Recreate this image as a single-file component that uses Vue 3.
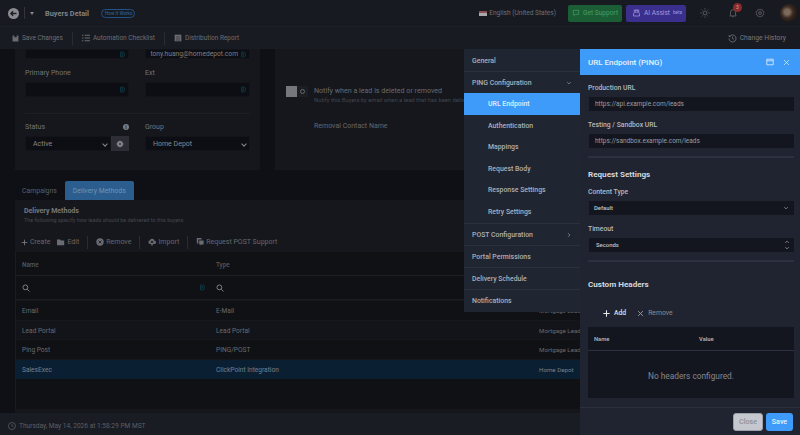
<script setup>
import { ref } from 'vue';

const subItems = ref(['Authentication', 'Mappings', 'Request Body', 'Response Settings', 'Retry Settings']);
const bottomItems = ref(['Portal Permissions', 'Delivery Schedule', 'Notifications']);
const rows = ref([
  { name: 'Email', type: 'E-Mail', group: 'Mortgage Lead' },
  { name: 'Lead Portal', type: 'Lead Portal', group: 'Mortgage Lead' },
  { name: 'Ping Post', type: 'PING/POST', group: 'Mortgage Lead' },
  { name: 'SalesExec', type: 'ClickPoint Integration', group: 'Home Depot', selected: true }
]);
</script>

<template>
  <div class="app">
    <header class="topbar">
      <span class="back">
        <svg viewBox="0 0 12 12" width="9" height="9"><path d="M10 6H2.5M5.5 3 2.5 6l3 3" fill="none" stroke="#1c1e25" stroke-width="1.8"/></svg>
      </span>
      <span class="bar-sep"></span>
      <span class="caret"></span>
      <span class="page-title">Buyers Detail</span>
      <span class="how">How It Works</span>
      <span class="grow"></span>
      <span class="flag"></span>
      <span class="lang">English (United States)</span>
      <span class="btn-support">
        <svg viewBox="0 0 12 12" width="8" height="8"><path d="M2 2h8v6H5L3 10V8H2z" fill="none" stroke="#47a266" stroke-width="1"/></svg>
        Get Support
      </span>
      <span class="btn-ai">
        <svg viewBox="0 0 12 12" width="9" height="10"><path d="M3 2h6v4l1 1v3H2V7l1-1zM5 2v4M7 2v4" fill="none" stroke="#a59ae0" stroke-width="1"/></svg>
        AI Assist <sup>beta</sup>
      </span>
      <svg class="top-icon sun" viewBox="0 0 12 12" width="10" height="10"><circle cx="6" cy="6" r="2.3" fill="none" stroke="#63656b"/><path d="M6 0v2M6 10v2M0 6h2M10 6h2M1.8 1.8l1.4 1.4M8.8 8.8l1.4 1.4M1.8 10.2l1.4-1.4M8.8 3.2l1.4-1.4" stroke="#63656b" stroke-width=".8"/></svg>
      <span class="bell">
        <svg viewBox="0 0 12 12" width="10" height="10"><path d="M3 8.5V5a3 3 0 0 1 6 0v3.5l1 1H2zM5 10.5h2" fill="none" stroke="#63656b"/></svg>
        <span class="badge">3</span>
      </span>
      <svg class="top-icon gear" viewBox="0 0 12 12" width="10" height="10"><circle cx="6" cy="6" r="1.7" fill="none" stroke="#63656b"/><path d="M6 1l1 1.3 1.7-.3.6 1.6 1.5.9-.7 1.5.7 1.5-1.5.9-.6 1.6L7 9.7 6 11l-1-1.3-1.7.3-.6-1.6-1.5-.9.7-1.5-.7-1.5 1.5-.9.6-1.6L5 2.3z" fill="none" stroke="#63656b" stroke-width=".8"/></svg>
      <span class="avatar"></span>
    </header>

    <div class="toolbar">
      <span class="tool">
        <svg viewBox="0 0 12 12" width="7" height="7"><path d="M1 1h10v10H1zM4 1v3h4V1M3.5 11V7h5v4" fill="#6a6c72"/></svg>
        Save Changes
      </span>
      <span class="tool-sep"></span>
      <span class="tool">
        <svg viewBox="0 0 12 12" width="8" height="8"><path d="M0 2h2M4 2h8M0 6h2M4 6h8M0 10h2M4 10h8" stroke="#6a6c72" stroke-width="1.6"/></svg>
        Automation Checklist
      </span>
      <span class="tool-sep"></span>
      <span class="tool">
        <svg viewBox="0 0 12 12" width="8" height="8"><path d="M1 1h10v10H1z" fill="#6a6c72"/><path d="M4.5 3v8M7.5 3v8" stroke="#1a1c24" stroke-width=".8"/></svg>
        Distribution Report
      </span>
      <span class="grow"></span>
      <span class="tool history">
        <svg viewBox="0 0 12 12" width="9" height="9"><path d="M2.2 3.2A4.7 4.7 0 1 1 1.3 6M1.5 1.5v2h2M6 3.5V6l1.8 1" fill="none" stroke="#7b7d83"/></svg>
        Change History
      </span>
    </div>

    <main class="content">
      <div class="cards">
        <section class="card left-card">
          <div class="form-row first">
            <div class="field">
              <span class="input"><svg class="dp" viewBox="0 0 8 10" width="5" height="7"><path d="M1 1h2.5a4 4 0 0 1 0 8H1zM3 3.5 5 5 3 6.5z" fill="none" stroke="#0f4a58" stroke-width="1.1"/></svg></span>
            </div>
            <div class="field">
              <span class="input"><span class="value">tony.huang@homedepot.com</span><svg class="dp" viewBox="0 0 8 10" width="5" height="7"><path d="M1 1h2.5a4 4 0 0 1 0 8H1zM3 3.5 5 5 3 6.5z" fill="none" stroke="#0f4a58" stroke-width="1.1"/></svg></span>
            </div>
          </div>
          <div class="form-row second">
            <div class="field">
              <label>Primary Phone</label>
              <span class="input"><svg class="dp" viewBox="0 0 8 10" width="5" height="7"><path d="M1 1h2.5a4 4 0 0 1 0 8H1zM3 3.5 5 5 3 6.5z" fill="none" stroke="#0f4a58" stroke-width="1.1"/></svg></span>
            </div>
            <div class="field">
              <label>Ext</label>
              <span class="input"><svg class="dp" viewBox="0 0 8 10" width="5" height="7"><path d="M1 1h2.5a4 4 0 0 1 0 8H1zM3 3.5 5 5 3 6.5z" fill="none" stroke="#0f4a58" stroke-width="1.1"/></svg></span>
            </div>
          </div>
          <div class="card-divider"></div>
          <div class="form-row">
            <div class="field">
              <label class="with-info">Status <i class="info">i</i></label>
              <div class="select-line">
                <span class="input select">Active <em class="chev"></em></span>
                <span class="gear-btn">
                  <svg viewBox="0 0 12 12" width="8" height="8"><path d="M5 1h2l.4 1.5 1.4-.6 1.2 1.2-.6 1.4L11 5v2l-1.5.4.6 1.4-1.2 1.2-1.4-.6L7 11H5l-.4-1.5-1.4.6-1.2-1.2.6-1.4L1 7V5l1.5-.4-.6-1.4 1.2-1.2 1.4.6z" fill="#85878c"/><circle cx="6" cy="6" r="1.5" fill="#2c2e35"/></svg>
                </span>
              </div>
            </div>
            <div class="field">
              <label>Group</label>
              <span class="input select">Home Depot <em class="chev"></em></span>
            </div>
          </div>
        </section>

        <section class="card right-card">
          <div class="notify">
            <span class="toggle"><i></i><b></b></span>
            <div>
              <div class="notify-title">Notify when a lead is deleted or removed</div>
              <div class="notify-sub">Notify this Buyers by email when a lead that has been delivered</div>
            </div>
          </div>
          <div class="removal">Removal Contact Name</div>
        </section>
      </div>

      <div class="tabs">
        <span class="tab">Campaigns</span>
        <span class="tab active">Delivery Methods</span>
      </div>

      <section class="methods">
        <div class="methods-head">
          <div class="methods-title">Delivery Methods</div>
          <div class="methods-sub">The following specify how leads should be delivered to this buyers.</div>
        </div>
        <div class="methods-tools">
          <span class="mtool"><svg viewBox="0 0 10 10" width="7" height="7"><path d="M5 1v8M1 5h8" stroke="#7b7d83" stroke-width="1.2"/></svg>Create</span>
          <span class="mtool"><svg viewBox="0 0 10 10" width="8" height="8"><path d="M0 2h4l1 1h4v6H0z" fill="#6a6c72"/></svg>Edit</span>
          <span class="tool-sep"></span>
          <span class="mtool"><svg viewBox="0 0 10 10" width="8" height="8"><circle cx="5" cy="5" r="4.6" fill="#6a6c72"/><path d="M3.2 3.2l3.6 3.6M6.8 3.2 3.2 6.8" stroke="#1a1c24" stroke-width="1.1"/></svg>Remove</span>
          <span class="tool-sep"></span>
          <span class="mtool"><svg viewBox="0 0 10 10" width="8" height="8"><path d="M2.5 7.5a2.3 2.3 0 0 1-.3-4.5A3 3 0 0 1 8 3.3a2.1 2.1 0 0 1 0 4.2H6V5.5h1.3L5 3 2.7 5.5H4v2zM4 6h2v3.500H4z" fill="#6a6c72"/></svg>Import</span>
          <span class="tool-sep"></span>
          <span class="mtool"><svg viewBox="0 0 10 10" width="8" height="8"><path d="M1 0h6v2H3v5H1zM4 3h5.5v5H7l-1 2V8H4z" fill="#6a6c72"/></svg>Request POST Support</span>
        </div>
        <div class="table">
          <div class="t-row t-head"><span>Name</span><span>Type</span><span></span></div>
          <div class="t-row t-filter">
            <span>
              <svg viewBox="0 0 10 10" width="8" height="8"><circle cx="4.2" cy="4.2" r="3" fill="none" stroke="#8a8c90" stroke-width="1.1"/><path d="M6.5 6.5 9.4 9.4" stroke="#8a8c90" stroke-width="1.1"/></svg>
              <svg class="dp" viewBox="0 0 8 10" width="5" height="7"><path d="M1 1h2.5a4 4 0 0 1 0 8H1zM3 3.5 5 5 3 6.5z" fill="none" stroke="#0f4a58" stroke-width="1.1"/></svg>
            </span>
            <span>
              <svg viewBox="0 0 10 10" width="8" height="8"><circle cx="4.2" cy="4.2" r="3" fill="none" stroke="#8a8c90" stroke-width="1.1"/><path d="M6.5 6.5 9.4 9.4" stroke="#8a8c90" stroke-width="1.1"/></svg>
            </span>
            <span></span>
          </div>
          <div v-for="row in rows" :key="row.name" class="t-row t-body" :class="{ selected: row.selected }">
            <span>{{ row.name }}</span>
            <span>{{ row.type }}</span>
            <span class="group-cell">{{ row.group }}</span>
          </div>
        </div>
      </section>
    </main>

    <footer class="statusbar">
      <svg viewBox="0 0 12 12" width="8" height="8"><circle cx="6" cy="6" r="5.3" fill="none" stroke="#64666c"/><path d="M6 3v3.2l2 1" fill="none" stroke="#64666c"/></svg>
      Thursday, May 14, 2026 at 1:58:29 PM MST
    </footer>

    <!-- drawer + its side menu sit over the page -->
    <nav class="side-menu">
      <div class="m-item">General</div>
      <div class="m-item open">PING Configuration
        <svg viewBox="0 0 10 10" width="6" height="6"><path d="M2 3.5 5 6.5l3-3" fill="none" stroke="#9da3ad" stroke-width="1.1"/></svg>
      </div>
      <div class="m-sub active">URL Endpoint</div>
      <div v-for="item in subItems" :key="item" class="m-sub">{{ item }}</div>
      <div class="m-item top-line">POST Configuration
        <svg viewBox="0 0 10 10" width="6" height="6"><path d="M3.5 2 6.5 5l-3 3" fill="none" stroke="#9da3ad" stroke-width="1.1"/></svg>
      </div>
      <div v-for="item in bottomItems" :key="item" class="m-item top-line">{{ item }}</div>
    </nav>

    <aside class="drawer">
      <div class="d-head">
        <span>URL Endpoint (PING)</span>
        <span class="d-icons">
          <svg viewBox="0 0 10 10" width="8" height="8"><path d="M1 1.5h8v7H1zM1 3.5h8" fill="none" stroke="#e6f1fd"/></svg>
          <svg viewBox="0 0 10 10" width="7" height="7"><path d="M1.5 1.5l7 7M8.5 1.5l-7 7" stroke="#e6f1fd"/></svg>
        </span>
      </div>
      <div class="d-body">
        <label class="d-label">Production URL</label>
        <div class="d-input url">https://api.example.com/leads</div>
        <label class="d-label">Testing / Sandbox URL</label>
        <div class="d-input url">https://sandbox.example.com/leads</div>
        <div class="d-rule"></div>

        <h3 class="d-section">Request Settings</h3>
        <label class="d-label">Content Type</label>
        <div class="d-input small">Default
          <svg viewBox="0 0 10 10" width="6" height="6"><path d="M2 3.5 5 6.5l3-3" fill="none" stroke="#a6abb3" stroke-width="1.1"/></svg>
        </div>
        <label class="d-label">Timeout</label>
        <div class="d-input small seconds">Seconds
          <span class="spin">
            <svg viewBox="0 0 10 6" width="6" height="4"><path d="M2 4.5 5 1.5l3 3" fill="none" stroke="#a6abb3" stroke-width="1.1"/></svg>
            <svg viewBox="0 0 10 6" width="6" height="4"><path d="M2 1.5 5 4.5l3-3" fill="none" stroke="#a6abb3" stroke-width="1.1"/></svg>
          </span>
        </div>
        <div class="d-rule"></div>

        <h3 class="d-section headers">Custom Headers</h3>
        <div class="h-tools">
          <span class="h-add"><svg viewBox="0 0 10 10" width="7" height="7"><path d="M5 .5v9M.5 5h9" stroke="#e7e9ec" stroke-width="1.5"/></svg>Add</span>
          <span class="h-remove"><svg viewBox="0 0 10 10" width="7" height="7"><path d="M1.5 1.5l7 7M8.5 1.5l-7 7" stroke="#a2a5ab" stroke-width="1.2"/></svg>Remove</span>
        </div>
        <div class="h-table">
          <div class="h-row"><span>Name</span><span>Value</span></div>
          <div class="h-empty">No headers configured.</div>
        </div>
      </div>
      <div class="d-foot">
        <button class="b-close">Close</button>
        <button class="b-save">Save</button>
      </div>
    </aside>
  </div>
</template>

<style>
html, body { margin: 0; background: #0f1117; }
</style>

<style scoped>
.app {
  position: relative;
  width: 800px;
  height: 435px;
  overflow: hidden;
  display: flex;
  flex-direction: column;
  background: #0e1016;
  font-family: Roboto, "Liberation Sans", sans-serif;
  font-size: 7px;
  color: #8a8c91;
}
.grow { flex: 1; }

/* top bar */
.topbar {
  height: 26px;
  flex: none;
  display: flex;
  align-items: center;
  padding-left: 8px;
  background: #181a21;
}
.back {
  width: 11px;
  height: 11px;
  border-radius: 50%;
  background: #8b8c90;
  display: flex;
  align-items: center;
  justify-content: center;
}
.bar-sep { width: 1px; height: 12px; background: #33353c; margin: 0 5px; }
.caret {
  width: 0;
  height: 0;
  border-left: 2.5px solid transparent;
  border-right: 2.5px solid transparent;
  border-top: 3px solid #85878c;
}
.page-title { margin-left: 11px; font-weight: 700; font-size: 7.4px; color: #7f8186; }
.how {
  margin-left: 12px;
  padding: 1px 3px;
  width: 26px;
  text-align: center;
  white-space: nowrap;
  border: 1px solid #1f5288;
  border-radius: 8px;
  font-size: 4.6px;
  color: #2e6aa6;
}
.flag {
  width: 8px;
  height: 5px;
  margin-right: 2px;
  background: linear-gradient(#8a5157 0 50%, #a9a9ad 50% 100%);
}
.lang { font-size: 6.6px; color: #6d6f75; margin-right: 12px; }
.btn-support, .btn-ai {
  height: 17px;
  display: flex;
  align-items: center;
  gap: 3px;
  border-radius: 2px;
  font-size: 6.6px;
  white-space: nowrap;
  box-sizing: border-box;
}
.btn-support { width: 54px; padding-left: 4px; background: #1b5e35; color: #469e63; }
.btn-ai { width: 60px; margin-left: 4px; padding-left: 6px; background: #3a2f8c; color: #a29bd8; }
.btn-ai sup { font-size: 4.6px; line-height: 0; }
.top-icon.sun { margin-left: 14px; }
.bell { position: relative; margin-left: 18px; display: flex; }
.badge {
  position: absolute;
  top: -5px;
  left: 5px;
  width: 9px;
  height: 9px;
  border-radius: 50%;
  background: #8a2b2b;
  color: #c9a5a5;
  font-size: 5px;
  line-height: 9px;
  text-align: center;
}
.top-icon.gear { margin-left: 17px; }
.avatar {
  width: 18px;
  height: 18px;
  margin: 0 2px 0 15px;
  border-radius: 50%;
  background: radial-gradient(circle at 40% 45%, #7c6a5a 0 18%, #3a2a22 40%, #1c1512 75%);
}

/* action toolbar */
.toolbar {
  height: 23px;
  flex: none;
  display: flex;
  align-items: center;
  padding: 0 14px 0 12px;
  background: #191b22;
  border-top: 1px solid #1e2027;
  box-sizing: border-box;
}
.tool { display: flex; align-items: center; gap: 3px; font-size: 6.5px; color: #6c6e74; }
.tool-sep { width: 1px; height: 13px; background: #2a2c33; margin: 0 9px; }
.tool.history { color: #76787e; font-size: 6.8px; }

/* page behind */
.content {
  flex: 1;
  min-height: 0;
  overflow: hidden;
  padding-left: 15px;
  background: #0e1016;
}
.cards {
  display: grid;
  grid-template-columns: 245px 1fr;
  gap: 15px;
  height: 121px;
}
.card { background: #15171d; box-sizing: border-box; height: 121px; }
.left-card { padding: 0 10px; }
.form-row { display: grid; grid-template-columns: 104px 105px; gap: 16px; }
.form-row.second { margin-top: 9px; }
.field { min-width: 0; }
.field label { display: block; height: 10px; line-height: 10px; margin-bottom: 4px; font-size: 7px; color: #727479; }
.field label.with-info { display: flex; justify-content: space-between; align-items: center; }
.info {
  width: 6px;
  height: 6px;
  border-radius: 50%;
  background: #7a7c81;
  color: #15171d;
  font-size: 5px;
  line-height: 6px;
  font-style: normal;
  font-weight: 700;
  text-align: center;
}
.input {
  display: flex;
  align-items: center;
  height: 15px;
  padding: 0 3px 0 4px;
  box-sizing: border-box;
  background: #0d0e13;
  border: 1px solid #131419;
  color: #85878c;
  font-size: 7px;
}
.first .input { height: 10px; }
.input .value { flex: 1; text-align: right; white-space: nowrap; padding-right: 3px; color: #7d7f85; font-size: 6.7px; }
.dp { margin-left: auto; flex: none; }
.card-divider { height: 1px; background: #1d1f26; margin: 16px 0 8px; }
.select { padding: 1px 3px 0 7px; position: relative; }
.chev {
  margin-left: auto;
  width: 3px;
  height: 3px;
  border-right: 1px solid #85878c;
  border-bottom: 1px solid #85878c;
  transform: rotate(45deg);
}
.select-line { display: flex; }
.select-line .input { flex: 1; }
.gear-btn {
  width: 18px;
  height: 15px;
  background: #2c2e35;
  display: flex;
  align-items: center;
  justify-content: center;
}
.right-card { padding: 37px 0 0 11px; }
.notify { display: flex; gap: 6px; align-items: flex-start; }
.toggle {
  width: 22px;
  height: 11px;
  background: #1c1e25;
  display: flex;
  align-items: center;
}
.toggle i { width: 11px; height: 11px; background: #76777c; }
.toggle b { width: 3px; height: 3px; margin-left: 3px; border: 1px solid #66686d; border-radius: 50%; }
.notify-title { font-size: 7.1px; line-height: 9px; color: #686a70; white-space: nowrap; }
.notify-sub { font-size: 5.8px; line-height: 6px; margin-top: 2px; color: #44464c; white-space: nowrap; }
.removal { margin: 18px 0 0 28px; font-size: 7px; line-height: 10px; color: #65676d; }

.tabs { display: flex; align-items: flex-end; height: 30px; }
.tab { height: 19px; line-height: 21px; padding: 0 8px 0 7px; font-size: 6.9px; color: #5d5f65; }
.tab.active { padding: 0 8px; background: #2b5d8f; border-radius: 2px 2px 0 0; color: #7194b5; }
.methods { background: #15171d; height: 213px; }
.methods-head { padding: 7px 9px 0; height: 25px; box-sizing: border-box; }
.methods-title { font-size: 7px; line-height: 9px; font-weight: 700; color: #76787e; }
.methods-sub { margin-top: 1px; font-size: 5.45px; line-height: 6px; color: #45474d; }
.methods-tools { height: 27px; display: flex; align-items: center; padding: 7px 0 0 6px; box-sizing: border-box; color: #65676d; }
.mtool { display: flex; align-items: center; gap: 2px; margin-right: 7px; font-size: 7px; white-space: nowrap; }
.methods-tools .tool-sep { margin: 0 8px 0 1px; }
.table { border-left: 1px solid #1a1c22; background: #0f1115; height: 157px; }
.t-row {
  display: grid;
  grid-template-columns: 194px 322px 1fr;
  align-items: center;
  font-size: 6.6px;
  color: #696b70;
}
.t-row span { padding-left: 6px; display: flex; align-items: center; }
.t-row .group-cell { padding-left: 7px; font-size: 6.2px; white-space: nowrap; }
.t-head { height: 24px; padding-top: 3px; border-bottom: 1px solid #1c1f27; font-weight: 500; color: #55575d; font-size: 6.3px; box-sizing: border-box; }
.t-filter { height: 24px; border-bottom: 1px solid #1c1e24; box-sizing: border-box; }
.t-filter .dp { margin: 0 5px 0 auto; }
.t-body { height: 19.7px; padding-top: 1px; border-top: 1px solid #15171c; box-sizing: border-box; }
.t-body:nth-child(even) { background: #12141a; }
.t-body.selected { background: #0b1f33; color: #74808d; }

.statusbar {
  height: 22px;
  flex: none;
  display: flex;
  align-items: center;
  gap: 3px;
  padding: 4px 0 0 8px;
  box-sizing: border-box;
  background: #1a1c23;
  color: #5c5e64;
  font-size: 6.6px;
}

/* overlay menu */
.side-menu {
  position: absolute;
  left: 464px;
  top: 49px;
  width: 116px;
  height: 263px;
  background: #1f2531;
  color: #adb0b6;
  font-size: 6.9px;
  font-weight: 500;
  box-sizing: border-box;
}
.m-item {
  height: 22px;
  display: flex;
  align-items: center;
  justify-content: space-between;
  padding: 1px 8px 0;
  box-sizing: border-box;
}
.m-item.open { border-top: 1px solid #2a303c; }
.m-item.top-line { border-top: 1px solid #2a303c; }
.m-sub { height: 21.6px; line-height: 23px; padding-left: 24px; }
.m-sub.active { background: #3e9bf9; color: #d9eafd; font-weight: 600; }

/* drawer */
.drawer {
  position: absolute;
  left: 580px;
  top: 49px;
  width: 220px;
  height: 386px;
  display: flex;
  flex-direction: column;
  background: #1f2430;
  color: #cfd2d7;
}
.d-head {
  height: 26px;
  flex: none;
  display: flex;
  align-items: center;
  justify-content: space-between;
  padding: 0 10px 0 8px;
  background: #3e9bf9;
  color: #e6f1fd;
  font-size: 8px;
  font-weight: 500;
}
.d-icons { display: flex; align-items: center; gap: 9px; }
.d-body { flex: 1; min-height: 0; padding: 9px 6px 0 8px; }
.d-label { display: block; font-size: 6.8px; font-weight: 500; color: #b6b9bf; height: 8px; line-height: 9px; }
.d-input {
  margin: 5px 0 10px 1px;
  height: 14px;
  display: flex;
  align-items: center;
  justify-content: space-between;
  padding: 0 5px 0 6px;
  background: #14161f;
  color: #9a9da4;
  font-size: 6.5px;
}
.d-input.small { font-size: 5.9px; font-weight: 500; color: #c0c2c8; padding-left: 5px; }
.d-input.seconds { padding-left: 7px; padding-right: 4px; }
.spin { display: flex; flex-direction: column; gap: 2px; }
.d-rule { height: 2px; background: #2b3140; margin-top: -2px; }
.d-section { margin: 11px 0 8px; font-size: 8.1px; font-weight: 700; color: #d5d8dc; line-height: 11px; }
.d-section.headers { margin: 17px 0 0; }
.h-tools { display: flex; align-items: center; height: 28px; margin-top: 9px; padding-left: 15px; gap: 11px; }
.h-add, .h-remove { display: flex; align-items: center; gap: 4px; font-size: 6.8px; }
.h-add { color: #dfe1e4; font-weight: 500; }
.h-remove { color: #8a8d94; }
.h-table { background: #14161f; height: 71px; }
.h-row {
  display: grid;
  grid-template-columns: 105px 1fr;
  height: 23px;
  align-items: center;
  padding-left: 6px;
  border-bottom: 1px solid #2b3140;
  font-size: 5.8px;
  font-weight: 700;
  color: #a6a9b0;
}
.h-empty { text-align: center; font-size: 8.3px; line-height: 50px; color: #85878e; }
.d-foot {
  height: 27px;
  flex: none;
  display: flex;
  justify-content: flex-end;
  align-items: center;
  gap: 3px;
  padding-right: 7px;
  border-top: 1px solid #2a303c;
}
.d-foot button {
  height: 18px;
  border: 0;
  border-radius: 3px;
  font-family: inherit;
  font-size: 7.1px;
  font-weight: 500;
  padding: 0;
}
.b-close { width: 30px; background: #c5c8cf; color: #8e9097; border: 1px solid #9ca0a8 !important; }
.b-save { width: 27px; background: #3e9bf9; color: #e6f1fd; }
</style>
